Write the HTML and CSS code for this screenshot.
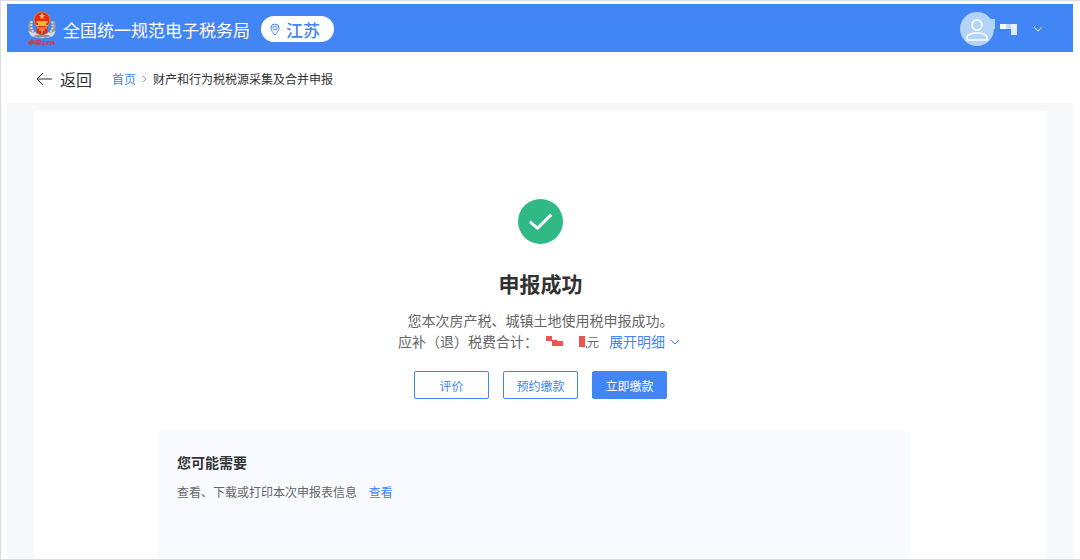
FILE: index.html
```html
<!DOCTYPE html>
<html lang="zh-CN">
<head>
    <meta charset="UTF-8">
    <meta name="viewport" content="width=device-width, initial-scale=1.0">
    <title>全国统一规范电子税务局</title>
    <link rel="stylesheet" href="styles.css">
</head>
<body>
  <div class="page">
    <header class="header">
        <svg class="emblem" viewBox="0 0 28 36" aria-hidden="true">
            <path d="M3 10C0 18 3 25 14 26C25 25 28 18 25 10" fill="none" stroke="#9a9ca3" stroke-width="3"/>
            <path d="M4 10C2 18 5 23 14 25C23 23 26 18 24 10" fill="none" stroke="#d8d3c4" stroke-width="2" stroke-dasharray="2 1"/>
            <path d="M0 20l6 2 8 2 8-2 6-2-3 5-6 2H9l-6-2z" fill="#d9dce2"/>
            <path d="M5 25l7-2h4l7 2-5 2-4-1-4 1z" fill="#8e929b"/>
            <circle cx="14" cy="9" r="8" fill="#e8281e" stroke="#d9862c"/>
            <path d="M14 2l1 2h2l-2 2 1 2-2-1-2 1 1-2-2-2h2z" fill="#ffd43b"/>
            <path d="M9 10h10l1 2H8zM10 12h8v2h-8zM8 14h12v1H8z" fill="#f8b62d"/>
            <path d="M8 16h12l-1 6-5 2-5-2z" fill="#d92c20"/>
            <path d="M9 17h10M11 19h6M14 17v6" stroke="#f2b134" fill="none"/>
            <path d="M1 31l5-1v2l-5 1zM4 28l-1 7M8 30l4-1v4H8zM9 32h2M14 31l3-1M15 30v4l2-1M19 30v4M18 31h3M22 31h4M23 30l-1 4M25 30v3l2-1" fill="none" stroke="#e0353a" stroke-width="1.3"/>
        </svg>
        <h1 class="site-name">全国统一规范电子税务局</h1>
        <button class="region" type="button">
            <svg class="pin" viewBox="0 0 10 13" aria-hidden="true">
                <path d="M5 12C3 10 1 7 1 5a4 4 0 0 1 8 0c0 2-2 5-4 7z"/>
                <circle cx="5" cy="5" r="2"/>
            </svg>
            江苏
        </button>
        <button class="user" type="button" aria-label="用户菜单">
            <svg class="avatar" viewBox="0 0 35 35" aria-hidden="true">
                <circle cx="17" cy="17" r="17" fill="#b3d3f9"/>
                <path d="M29 7h6v10h-6z" fill="#b3d3f9"/>
                <circle cx="17" cy="13" r="5"/>
                <path d="M7 28v-3c0-2 4-4 10-4s10 2 10 4v3z"/>
            </svg>
            <svg class="user-name" viewBox="0 0 17 12" aria-hidden="true">
                <path d="M0 1h6v5H0z" fill="#fff"/>
                <path d="M6 1h5v5H6z" fill="#c3d8fc"/>
                <path d="M11 1h6v5h-6z" fill="#e8f0fe"/>
                <path d="M11 6h6v6h-6z" fill="#dce8fd"/>
            </svg>
            <svg class="chevron" viewBox="0 0 8 6" aria-hidden="true"><path d="M0 1l4 4 4-4"/></svg>
        </button>
    </header>

    <nav class="crumbs">
        <a class="back" href="#">
            <svg class="back-arrow" viewBox="0 0 16 14" aria-hidden="true"><path d="M16 7H1M7 1L1 7l6 6"/></svg>
            返回
        </a>
        <a class="link" href="#">首页</a>
        <svg class="separator" viewBox="0 0 5 8" aria-hidden="true"><path d="M1 1l3 3-3 3"/></svg>
        <span>财产和行为税税源采集及合并申报</span>
    </nav>

    <main class="content">
        <div class="card">
            <svg class="success" viewBox="0 0 46 46" aria-hidden="true">
                <circle cx="23" cy="23" r="23" fill="#30b885"/>
                <path d="M12 23l8 7 14-14" fill="none" stroke="#fff" stroke-width="3"/>
            </svg>
            <h2 class="result">申报成功</h2>
            <div class="summary">
                <p>您本次房产税、城镇土地使用税申报成功。</p>
                <p class="amount">
                    <span>应补（退）税费合计：</span>
                    <svg class="masked" viewBox="0 0 41 14" aria-hidden="true">
                        <path d="M0 1h6v4h5v1h6v5H6V6H0zM33 1h6v11h-6z" fill="#f05252"/>
                        <path d="M40 11h1v2h-1z" fill="#666"/>
                    </svg>
                    <span class="unit">元</span>
                    <a class="link" href="#">展开明细
                        <svg class="chevron" viewBox="0 0 8 6" aria-hidden="true"><path d="M0 1l4 4 4-4"/></svg>
                    </a>
                </p>
            </div>
            <div class="actions">
                <button class="btn" type="button">评价</button>
                <button class="btn" type="button">预约缴款</button>
                <button class="btn btn-primary" type="button">立即缴款</button>
            </div>
            <section class="more">
                <h3>您可能需要</h3>
                <p>查看、下载或打印本次申报表信息 <a class="link" href="#">查看</a></p>
            </section>
        </div>
    </main>
  </div>
</body>
</html>
```

FILE: styles.css
```css
* {
    margin: 0;
    padding: 0;
    box-sizing: border-box;
}

body {
    font-family: "Noto Sans CJK SC", sans-serif;
    font-size: 12px;
    color: #333;
    background: #fff;
}

button {
    font-family: inherit;
    cursor: pointer;
}

a {
    color: inherit;
    text-decoration: none;
}

svg {
    display: block;
    flex-shrink: 0;
}

.page {
    min-height: 100vh;
    display: flex;
    flex-direction: column;
    padding: 3px 7px 0 6px;
    border: 1px solid #ddd;
    border-right: none;
}

.header {
    height: 48px;
    display: flex;
    align-items: center;
    padding: 2px 31px 0 21px;
    background: #4285f4;
    color: #fff;
}

.emblem {
    width: 28px;
    height: 36px;
}

.site-name {
    margin: 0 11px 0 7px;
    font-size: 17px;
    font-weight: 400;
}

.region {
    display: flex;
    align-items: center;
    gap: 6px;
    height: 26px;
    padding: 0 14px 0 9px;
    border: none;
    border-radius: 13px;
    background: #fff;
    color: #4285f4;
    font-size: 17px;
    font-weight: 500;
}

.pin {
    width: 10px;
    height: 13px;
    fill: none;
    stroke: #4285f4;
}

.user {
    display: flex;
    align-items: center;
    margin-left: auto;
    border: none;
    background: none;
    color: #fff;
}

.avatar {
    width: 35px;
    height: 35px;
    fill: none;
    stroke: #fff;
    stroke-width: 1.5;
}

.avatar path[fill],
.avatar circle[fill] {
    stroke: none;
}

.user-name {
    width: 17px;
    height: 12px;
    margin: 0 17px 0 5px;
}

.chevron {
    width: 8px;
    height: 6px;
    fill: none;
    stroke: currentColor;
}

.crumbs {
    height: 51px;
    display: flex;
    align-items: center;
    padding: 2px 0 0 29px;
}

.back {
    display: flex;
    align-items: center;
    gap: 8px;
    margin-right: 20px;
    font-size: 16px;
}

.back-arrow {
    width: 16px;
    height: 14px;
    fill: none;
    stroke: #333;
}

.separator {
    width: 5px;
    height: 8px;
    margin: 0 6px;
    fill: none;
    stroke: #999;
}

.link {
    color: #4285f4;
}

.content {
    flex: 1;
    display: flex;
    padding: 8px 26px 0 27px;
    background: #f7f8fa;
}

.card {
    flex: 1;
    display: flex;
    flex-direction: column;
    align-items: center;
    padding-top: 88px;
    background: #fff;
}

.success {
    width: 45px;
    height: 45px;
}

.result {
    margin-top: 23px;
    font-size: 21px;
    line-height: 32px;
}

.summary {
    margin-top: 11px;
    font-size: 14px;
    line-height: 21px;
    color: #666;
    text-align: center;
}

.amount,
.amount .link {
    display: flex;
    align-items: center;
}

.amount {
    padding-right: 4px;
}

.amount .link {
    gap: 6px;
    margin-left: 10px;
}

.masked {
    width: 41px;
    height: 14px;
    margin-left: 8px;
}

.unit {
    font-size: 12px;
}

.actions {
    display: flex;
    gap: 14px;
    margin-top: 19px;
}

.btn {
    width: 75px;
    height: 28px;
    border: 1px solid #4285f4;
    border-radius: 2px;
    background: #fff;
    color: #4285f4;
    font-size: 12px;
}

.btn-primary {
    background: #4285f4;
    color: #fff;
}

.more {
    flex: 1;
    align-self: stretch;
    margin: 32px 137px 0 123px;
    padding: 20px;
    background: #f8faff;
    color: #666;
}

.more h3 {
    margin-bottom: 9px;
    font-size: 14px;
    line-height: 22px;
    color: #333;
}

.more p {
    line-height: 20px;
}

.more .link {
    margin-left: 9px;
}
```
